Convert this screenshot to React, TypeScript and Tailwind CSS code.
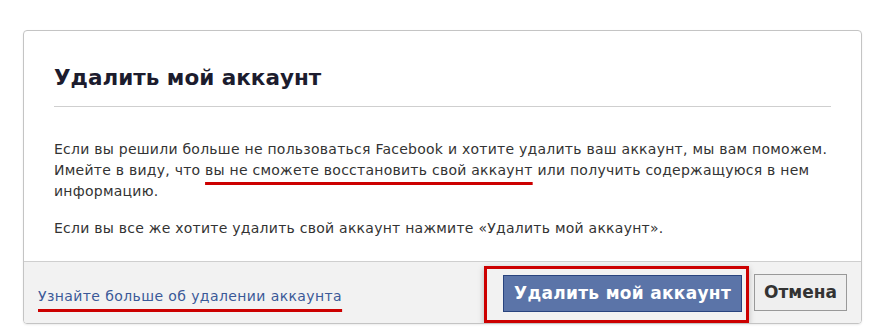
export default function App() {
  return (
    <div className="w-[880px] h-[331px] bg-white pt-[30px] pl-[23px] font-['DejaVu_Sans',sans-serif]">
      <div className="w-[839px] h-[294px] border border-[#c4c4c4] rounded-[4px] flex flex-col overflow-hidden shadow-[0_1px_2px_rgba(0,0,0,0.08)]">
        <div className="flex-1 px-[30px] pt-[33px]">
          <h2 className="text-[21.5px] leading-[28px] font-bold text-[#1c1c2e] pb-[14px] border-b border-[#cfcfcf]">
            Удалить мой аккаунт
          </h2>
          <div className="pt-[32px] text-[14px] leading-[21px] text-[#333] tracking-[0.25px] whitespace-nowrap">
            <p>
              Если вы решили больше не пользоваться Facebook и хотите удалить ваш аккаунт, мы вам поможем.
              <br />
              Имейте в виду, что{" "}
              <span className="underline decoration-[#c00] decoration-[3px] underline-offset-[7px]">
                вы не сможете восстановить свой аккаунт
              </span>{" "}
              или получить содержащуюся в нем
              <br />
              информацию.
            </p>
            <p className="mt-[16px]">Если вы все же хотите удалить свой аккаунт нажмите «Удалить мой аккаунт».</p>
          </div>
        </div>
        <div className="h-[62px] bg-[#f2f2f2] border-t border-[#cfcfcf] flex items-center pl-[14px] pr-[14px]">
          <a className="text-[14px] tracking-[0.4px] text-[#3b5998] underline decoration-[#c00] decoration-[3px] underline-offset-[8px] pt-[7px]">
            Узнайте больше об удалении аккаунта
          </a>
          <div className="ml-auto flex items-center">
            <div className="border-[3px] border-[#c00] pl-[16px] pr-[4px] pt-[6px] pb-[8px] shadow-[0_2px_6px_rgba(0,0,0,0.25)] mt-[4px]">
              <button className="h-[37px] px-[10px] bg-[#5b74a8] border border-[#29447e] text-white text-[17px] tracking-[0.3px] font-bold">
                Удалить мой аккаунт
              </button>
            </div>
            <button className="ml-[5px] h-[37px] px-[9px] bg-[#efefef] border border-[#999] text-[#333] text-[17px] font-bold">
              Отмена
            </button>
          </div>
        </div>
      </div>
    </div>
  );
}
